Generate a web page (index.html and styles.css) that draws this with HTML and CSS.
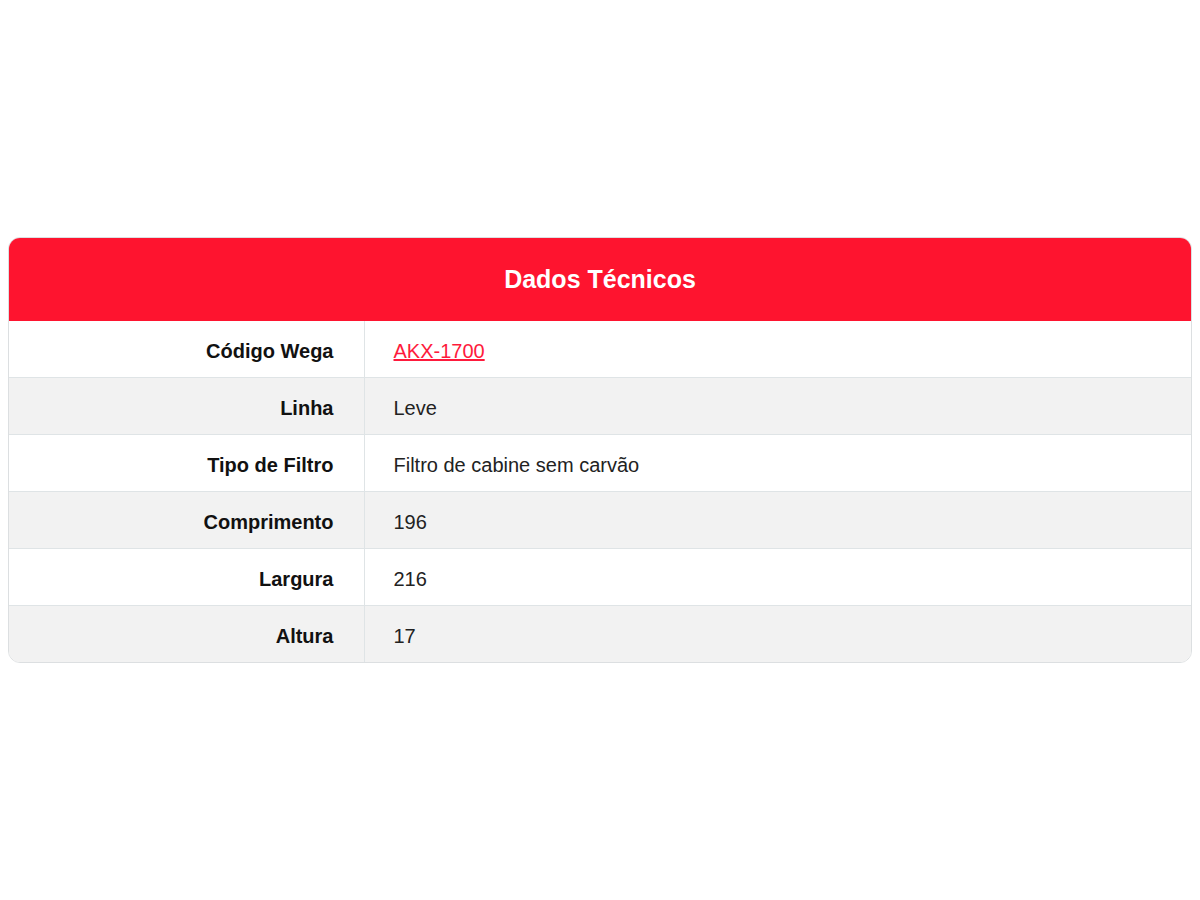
FILE: index.html
```html
<!DOCTYPE html>
<html lang="pt-BR">
<head>
<meta charset="utf-8">
<title>Dados Técnicos</title>
<link rel="stylesheet" href="styles.css">
</head>
<body>
<div class="page">
  <div class="card">
    <div class="card-header">Dados Técnicos</div>
    <table class="specs">
      <tbody>
        <tr><th>Código Wega</th><td><a href="#" class="code-link">AKX-1700</a></td></tr>
        <tr><th>Linha</th><td>Leve</td></tr>
        <tr><th>Tipo de Filtro</th><td>Filtro de cabine sem carvão</td></tr>
        <tr><th>Comprimento</th><td>196</td></tr>
        <tr><th>Largura</th><td>216</td></tr>
        <tr><th>Altura</th><td>17</td></tr>
      </tbody>
    </table>
  </div>
</div>
</body>
</html>
```
FILE: styles.css
```css
html, body {
  margin: 0;
  padding: 0;
  background: #ffffff;
}
body {
  font-family: "Liberation Sans", Arial, sans-serif;
  color: #1a1a1a;
}
.page {
  height: 900px;
  display: flex;
  align-items: center;
  justify-content: center;
  padding: 0 8px;
  box-sizing: border-box;
}
.card {
  width: 100%;
  border: 1px solid #dcdfe1;
  border-radius: 12px;
  overflow: hidden;
  background: #fff;
}
.card-header {
  background: #fe142f;
  color: #fff;
  font-weight: bold;
  font-size: 25px;
  text-align: center;
  height: 83px;
  line-height: 83px;
}
.specs {
  width: 100%;
  border-collapse: collapse;
  font-size: 20px;
}
.specs tr {
  height: 56.8px;
  border-top: 1px solid #dfe4e6;
}
.specs tr:first-child {
  border-top: none;
}
.specs tr:nth-child(even) {
  background: #f2f2f2;
}
.specs th {
  width: 355px;
  box-sizing: border-box;
  text-align: right;
  font-weight: bold;
  padding: 5px 30px 0 0;
  border-right: 1px solid #dfe4e6;
  color: #111;
}
.specs td {
  text-align: left;
  padding: 5px 0 0 29px;
  color: #222;
}
.code-link {
  color: #fe1a3c;
  text-decoration: underline;
}
```
